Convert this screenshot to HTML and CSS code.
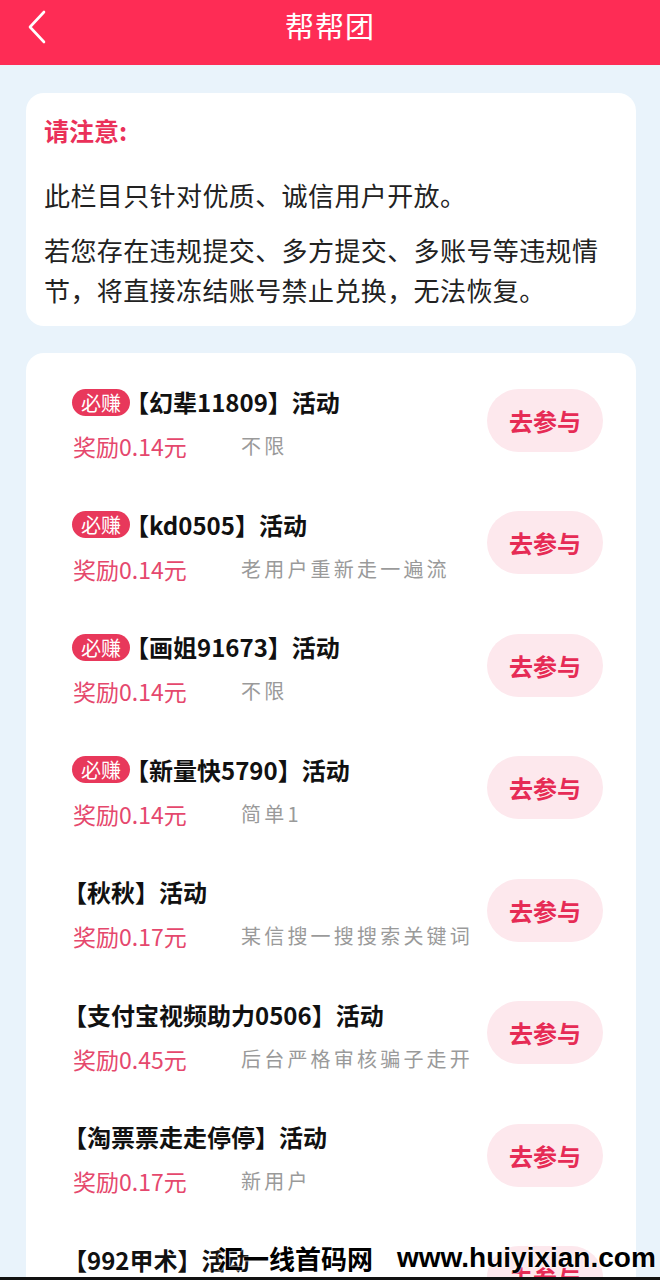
FILE: index.html
```html
<!DOCTYPE html>
<html lang="zh-CN">
<head>
<meta charset="utf-8">
<title>帮帮团</title>
<link rel="stylesheet" href="styles.css">
</head>
<body>
<header class="topbar">
  <span class="back">
    <svg width="20" height="34" viewBox="0 0 20 34"><path d="M16 2 L2 17 L16 32" fill="none" stroke="#fff" stroke-width="2.6" stroke-linecap="round" stroke-linejoin="round"/></svg>
  </span>
  <h1 class="title">帮帮团</h1>
  <span class="spacer"></span>
</header>
<main class="main">
  <section class="card notice">
    <h2 class="notice-head">请注意:</h2>
    <p class="notice-p">此栏目只针对优质、诚信用户开放。</p>
    <p class="notice-p gap">若您存在违规提交、多方提交、多账号等违规情节，将直接冻结账号禁止兑换，无法恢复。</p>
  </section>
  <section class="card list">
    <div class="item">
      <div class="info">
        <div class="name"><span class="badge">必赚</span><span class="name-text">【幻辈11809】活动</span></div>
        <div class="meta"><span class="reward">奖励0.14元</span><span class="desc">不限</span></div>
      </div>
      <button class="join">去参与</button>
    </div>
    <div class="item">
      <div class="info">
        <div class="name"><span class="badge">必赚</span><span class="name-text">【kd0505】活动</span></div>
        <div class="meta"><span class="reward">奖励0.14元</span><span class="desc">老用户重新走一遍流</span></div>
      </div>
      <button class="join">去参与</button>
    </div>
    <div class="item">
      <div class="info">
        <div class="name"><span class="badge">必赚</span><span class="name-text">【画姐91673】活动</span></div>
        <div class="meta"><span class="reward">奖励0.14元</span><span class="desc">不限</span></div>
      </div>
      <button class="join">去参与</button>
    </div>
    <div class="item">
      <div class="info">
        <div class="name"><span class="badge">必赚</span><span class="name-text">【新量快5790】活动</span></div>
        <div class="meta"><span class="reward">奖励0.14元</span><span class="desc">简单1</span></div>
      </div>
      <button class="join">去参与</button>
    </div>
    <div class="item">
      <div class="info">
        <div class="name plain"><span class="name-text">【秋秋】活动</span></div>
        <div class="meta"><span class="reward">奖励0.17元</span><span class="desc">某信搜一搜搜索关键词</span></div>
      </div>
      <button class="join">去参与</button>
    </div>
    <div class="item">
      <div class="info">
        <div class="name plain"><span class="name-text">【支付宝视频助力0506】活动</span></div>
        <div class="meta"><span class="reward">奖励0.45元</span><span class="desc">后台严格审核骗子走开</span></div>
      </div>
      <button class="join">去参与</button>
    </div>
    <div class="item">
      <div class="info">
        <div class="name plain"><span class="name-text">【淘票票走走停停】活动</span></div>
        <div class="meta"><span class="reward">奖励0.17元</span><span class="desc">新用户</span></div>
      </div>
      <button class="join">去参与</button>
    </div>
    <div class="item">
      <div class="info">
        <div class="name plain"><span class="name-text">【992甲术】活动</span></div>
        <div class="meta"><span class="reward">奖励0.17元</span><span class="desc">新用户</span></div>
      </div>
      <button class="join">去参与</button>
    </div>
  </section>
</main>
<div class="watermark"><span class="wm-cn">汇一线首码网</span><span class="wm-en">www.huiyixian.com</span></div>
<div class="bottom-line"></div>
</body>
</html>
```

FILE: styles.css
```css
* { box-sizing: border-box; }
html, body { margin: 0; padding: 0; }
body {
  width: 660px;
  height: 1280px;
  overflow: hidden;
  position: relative;
  background: #e9f3fb;
  font-family: "Noto Sans CJK SC", "Noto Sans", sans-serif;
  color: #1a1a1a;
}
.topbar {
  height: 65px;
  background: #fe2c55;
  display: grid;
  grid-template-columns: 90px 1fr 90px;
  align-items: center;
  padding-bottom: 16px;
}
.back {
  display: flex;
  align-items: center;
  padding-left: 28px;
  padding-top: 5px;
}
.title {
  margin: 0;
  text-align: center;
  color: #fff;
  font-size: 29px;
  font-weight: 400;
  line-height: 36px;
  letter-spacing: 1px;
}
.main {
  padding: 28px 24px 0 26px;
  display: flex;
  flex-direction: column;
  gap: 27px;
}
.card {
  background: #fff;
  border-radius: 18px;
}
.notice {
  padding: 22px 18px 16px 18px;
}
.notice-head {
  margin: 0;
  color: #ea3059;
  font-size: 25px;
  font-weight: 700;
  line-height: 30px;
}
.notice-p {
  margin: 30px 0 0 0;
  font-size: 26px;
  line-height: 40px;
  letter-spacing: 0.4px;
  color: #222;
}
.notice-p.gap { margin-top: 15px; }
.list {
  padding: 6px 33px 0 46px;
  height: 1000px;
}
.item {
  height: 122.5px;
  display: flex;
  align-items: center;
  justify-content: space-between;
}
.info {
  display: flex;
  flex-direction: column;
  padding-top: 8px;
}
.name {
  display: flex;
  align-items: center;
  height: 32px;
}
.name.plain { margin-left: -9px; }
.badge {
  display: inline-block;
  background: #e8385b;
  color: #fff;
  font-size: 20px;
  line-height: 27px;
  height: 27px;
  padding: 0 9px 0 9px;
  border-radius: 14px;
  margin-right: -5px;
}
.name-text {
  font-size: 24px;
  font-weight: 700;
  color: #111;
  line-height: 32px;
}
.meta {
  margin-top: 12px;
  height: 32px;
  display: flex;
  align-items: center;
}
.reward {
  width: 169px;
  padding-left: 1px;
  font-size: 23px;
  color: #e5486d;
  line-height: 32px;
}
.desc {
  font-size: 20px;
  letter-spacing: 3.2px;
  color: #9a9a9a;
  line-height: 32px;
}
.join {
  width: 116px;
  height: 63px;
  border: none;
  border-radius: 32px;
  background: #fde8ed;
  color: #e62b55;
  font-family: "Noto Sans CJK SC", sans-serif;
  font-size: 24px;
  font-weight: 700;
  padding: 0;
  margin-top: 0;
}
.watermark {
  position: absolute;
  left: 217px;
  top: 1240px;
  display: flex;
  align-items: center;
  gap: 24px;
  color: #000;
  font-weight: 700;
  line-height: 36px;
  text-shadow: 0 0 2px #fff, 0 0 2px #fff;
}
.wm-cn {
  font-family: "Noto Sans CJK SC", sans-serif;
  font-size: 26px;
  letter-spacing: 0;
}
.wm-en {
  font-family: "Liberation Sans", sans-serif;
  font-size: 28px;
}
.bottom-line {
  position: absolute;
  left: 0;
  right: 0;
  bottom: 0;
  height: 3px;
  background: #111;
}
```
